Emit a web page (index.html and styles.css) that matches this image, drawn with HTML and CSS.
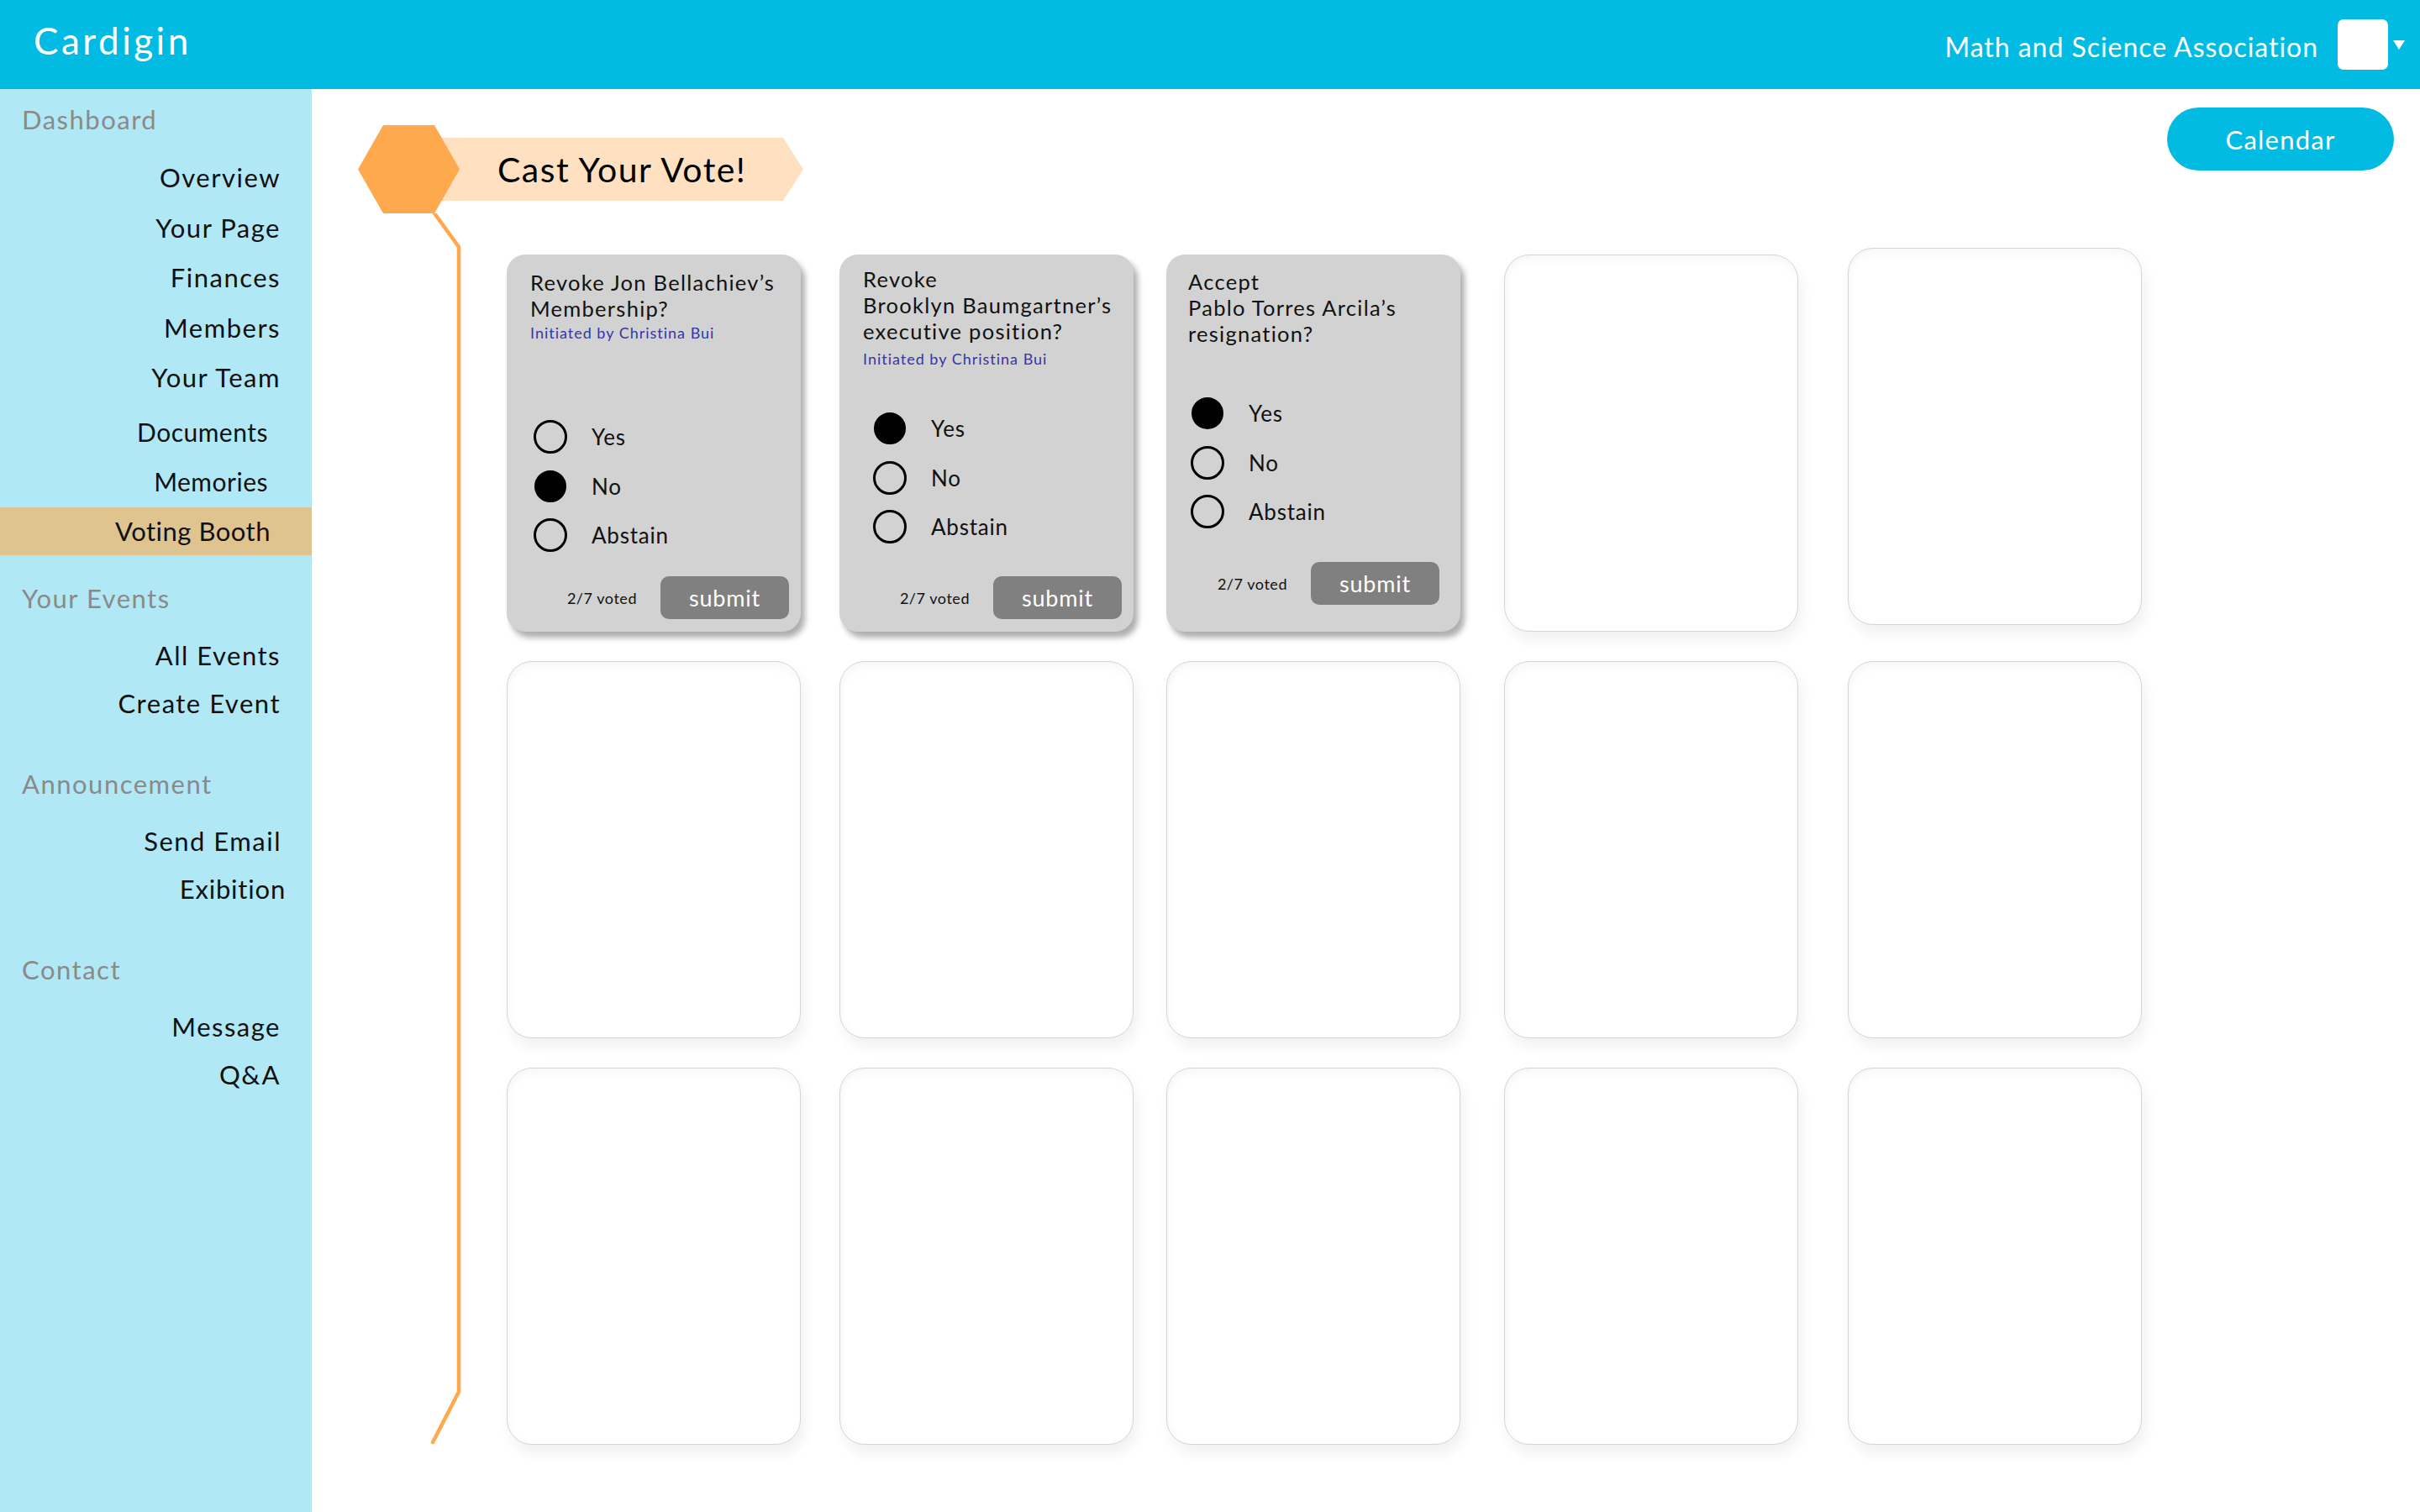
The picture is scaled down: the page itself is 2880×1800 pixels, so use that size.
FILE: index.html
```html
<!DOCTYPE html>
<html lang="en">
<head>
<meta charset="utf-8">
<title>Cardigin – Voting Booth</title>
<link rel="stylesheet" href="styles.css">
</head>
<body>
<div class="app">
  <header class="topbar">
    <div class="brand">Cardigin</div>
    <div class="org">
      <span class="org-name">Math and Science Association</span>
      <span class="org-avatar"></span>
      <span class="org-caret"></span>
    </div>
  </header>

  <nav class="sidebar">
    <section class="nav-section nav-section--main">
      <h2 class="nav-heading">Dashboard</h2>
      <ul class="nav-list">
        <li><a class="nav-link" href="#">Overview</a></li>
        <li><a class="nav-link" href="#">Your Page</a></li>
        <li><a class="nav-link" href="#">Finances</a></li>
        <li><a class="nav-link" href="#">Members</a></li>
        <li><a class="nav-link" href="#">Your Team</a></li>
        <li><a class="nav-link nav-link--indent nav-link--low" href="#">Documents</a></li>
        <li><a class="nav-link nav-link--indent" href="#">Memories</a></li>
        <li><a class="nav-link nav-link--active" href="#">Voting Booth</a></li>
      </ul>
    </section>
    <section class="nav-section nav-section--events">
      <h2 class="nav-heading">Your Events</h2>
      <ul class="nav-list">
        <li><a class="nav-link" href="#">All Events</a></li>
        <li><a class="nav-link" href="#">Create Event</a></li>
      </ul>
    </section>
    <section class="nav-section">
      <h2 class="nav-heading">Announcement</h2>
      <ul class="nav-list">
        <li><a class="nav-link nav-link--tight" href="#">Send Email</a></li>
        <li><a class="nav-link nav-link--outdent" href="#">Exibition</a></li>
      </ul>
    </section>
    <section class="nav-section">
      <h2 class="nav-heading">Contact</h2>
      <ul class="nav-list">
        <li><a class="nav-link" href="#">Message</a></li>
        <li><a class="nav-link" href="#">Q&amp;A</a></li>
      </ul>
    </section>
  </nav>

  <main class="main">
    <div class="main-head">
      <div class="page-title">
        <svg class="hex" viewBox="0 0 121 105" aria-hidden="true"><polygon points="30,0 91,0 121,52.5 91,105 30,105 0,52.5" fill="#ffa94f"/></svg>
        <h1 class="title-banner">Cast Your Vote!</h1>
      </div>
      <button class="calendar-btn" type="button">Calendar</button>
    </div>

    <div class="main-body">
      <svg class="rail" viewBox="0 0 177 1466" aria-hidden="true">
        <polyline points="91,0 120,40 120,1403 89,1463" fill="none" stroke="#ffa94f" stroke-width="4.5" stroke-linecap="round" stroke-linejoin="miter"/>
      </svg>

      <div class="board">
        <article class="vote-card vote-card--one">
          <h3 class="vote-title">Revoke Jon Bellachiev’s<br>Membership?</h3>
          <p class="vote-by">Initiated by Christina Bui</p>
          <ul class="vote-options">
            <li class="vote-option"><span class="radio"></span><span>Yes</span></li>
            <li class="vote-option"><span class="radio radio--on"></span><span>No</span></li>
            <li class="vote-option"><span class="radio"></span><span>Abstain</span></li>
          </ul>
          <div class="vote-footer"><span class="vote-count">2/7 voted</span><button class="submit-btn" type="button">submit</button></div>
        </article>

        <article class="vote-card vote-card--two">
          <h3 class="vote-title">Revoke<br>Brooklyn Baumgartner’s<br>executive position?</h3>
          <p class="vote-by">Initiated by Christina Bui</p>
          <ul class="vote-options">
            <li class="vote-option"><span class="radio radio--on"></span><span>Yes</span></li>
            <li class="vote-option"><span class="radio"></span><span>No</span></li>
            <li class="vote-option"><span class="radio"></span><span>Abstain</span></li>
          </ul>
          <div class="vote-footer"><span class="vote-count">2/7 voted</span><button class="submit-btn" type="button">submit</button></div>
        </article>

        <article class="vote-card vote-card--three">
          <h3 class="vote-title">Accept<br>Pablo Torres Arcila’s<br>resignation?</h3>
          <ul class="vote-options">
            <li class="vote-option"><span class="radio radio--on"></span><span>Yes</span></li>
            <li class="vote-option"><span class="radio"></span><span>No</span></li>
            <li class="vote-option"><span class="radio"></span><span>Abstain</span></li>
          </ul>
          <div class="vote-footer"><span class="vote-count">2/7 voted</span><button class="submit-btn" type="button">submit</button></div>
        </article>

        <div class="empty-card"></div>
        <div class="empty-card empty-card--raised"></div>

        <div class="empty-card"></div>
        <div class="empty-card"></div>
        <div class="empty-card"></div>
        <div class="empty-card"></div>
        <div class="empty-card"></div>

        <div class="empty-card"></div>
        <div class="empty-card"></div>
        <div class="empty-card"></div>
        <div class="empty-card"></div>
        <div class="empty-card"></div>
      </div>
    </div>
  </main>
</div>
</body>
</html>
```

FILE: styles.css
```css
* {
  box-sizing: border-box;
  margin: 0;
  padding: 0;
}

body {
  margin: 0;
  font-family: "Lato", "Noto Sans", sans-serif;
  color: #111;
  background: #fff;
}

.app {
  display: grid;
  grid-template-columns: 371px 1fr;
  grid-template-rows: 106px 1fr;
  height: 100vh;
  overflow: hidden;
}

/* ---------- top bar ---------- */
.topbar {
  grid-column: 1 / -1;
  background: #02bbe2;
  color: #fff;
  display: flex;
  align-items: center;
  justify-content: space-between;
  padding: 0 18px 0 40px;
}

.brand {
  font-size: 44px;
  letter-spacing: 0.08em;
  margin-bottom: 11px;
}

.org {
  display: flex;
  align-items: center;
}

.org-name {
  font-size: 32px;
  letter-spacing: 0.03em;
  margin-top: 4px;
}

.org-avatar {
  width: 60px;
  height: 60px;
  background: #fff;
  border-radius: 7px;
  margin-left: 23px;
}

.org-caret {
  width: 0;
  height: 0;
  border-left: 7px solid transparent;
  border-right: 7px solid transparent;
  border-top: 11px solid #fff;
  margin-left: 6px;
}

/* ---------- sidebar ---------- */
.sidebar {
  background: #b1e8f6;
  padding-top: 12px;
  font-size: 31px;
  letter-spacing: 1.5px;
}

.nav-section + .nav-section {
  margin-top: 43px;
}

.nav-section--events.nav-section {
  margin-top: 27px;
}

.nav-heading {
  font-size: 31px;
  font-weight: 400;
  line-height: 48px;
  padding-left: 26px;
  color: #8a8a8a;
  margin-bottom: 16px;
}

.nav-list {
  list-style: none;
}

.nav-link {
  display: block;
  text-align: right;
  padding-right: 37px;
  line-height: 57px;
  color: #111;
  text-decoration: none;
}

.nav-section--main .nav-link {
  line-height: 59.5px;
}

.nav-section--main .nav-link--indent {
  padding-right: 52px;
  font-size: 30px;
  letter-spacing: 0.5px;
}

.nav-section--main .nav-link--low {
  padding-top: 5px;
}

.nav-section--main .nav-link--active {
  background: #e0c48f;
  line-height: 57px;
  padding-right: 49px;
  letter-spacing: 0.5px;
}

.nav-link--tight {
  padding-right: 36px;
}

.nav-link--outdent {
  padding-right: 31px;
  letter-spacing: 0.8px;
}

/* ---------- main ---------- */
.main {
  padding: 22px 31px 0 55px;
  display: flex;
  flex-direction: column;
  min-width: 0;
}

.main-head {
  display: flex;
  justify-content: space-between;
  align-items: flex-start;
}

.page-title {
  display: flex;
  align-items: flex-start;
  margin-top: 21px;
}

.hex {
  width: 121px;
  height: 105px;
  flex: none;
  position: relative;
  z-index: 1;
}

.title-banner {
  margin-left: -60px;
  margin-top: 15px;
  width: 469px;
  height: 75px;
  background: #ffe0c0;
  clip-path: polygon(0 0, calc(100% - 24px) 0, 100% 50%, calc(100% - 24px) 100%, 0 100%);
  padding-left: 105px;
  font-size: 41px;
  font-weight: 400;
  letter-spacing: 0.036em;
  line-height: 75px;
  color: #000;
  white-space: nowrap;
}

.calendar-btn {
  width: 270px;
  height: 75px;
  border: 0;
  border-radius: 38px;
  background: #02bbe2;
  color: #fff;
  font-family: inherit;
  font-size: 31px;
  letter-spacing: 0.04em;
}

.main-body {
  display: flex;
}

.rail {
  width: 177px;
  height: 1466px;
  flex: none;
}

.board {
  padding-top: 49px;
  display: grid;
  grid-template-columns: 396px 389px 402px 409px 350px;
  grid-auto-rows: 449px;
  row-gap: 35px;
}

/* ---------- cards ---------- */
.empty-card {
  width: 350px;
  background: #fff;
  border: 1.5px solid #d5d5d5;
  border-radius: 30px;
  box-shadow: inset 0 10px 14px -6px rgba(0, 0, 0, 0.04), inset 8px 0 12px -8px rgba(0, 0, 0, 0.04), 4px 10px 16px rgba(0, 0, 0, 0.06);
}

.empty-card--raised {
  margin-top: -8px;
  margin-bottom: 8px;
}

.vote-card {
  width: 350px;
  background: #d2d2d2;
  border-radius: 22px;
  box-shadow: 5px 7px 7px rgba(0, 0, 0, 0.32);
  display: flex;
  flex-direction: column;
  padding: 18px 0 15px 28px;
}

.vote-title {
  font-size: 25.5px;
  font-weight: 400;
  line-height: 31px;
  letter-spacing: 0.05em;
  color: #111;
  white-space: nowrap;
}

.vote-by {
  font-size: 18px;
  line-height: 22px;
  letter-spacing: 0.055em;
  color: #3636a8;
  margin-top: 2px;
  white-space: nowrap;
}

.vote-options {
  list-style: none;
  margin-top: 84px;
  padding-left: 4px;
}

.vote-option {
  display: flex;
  align-items: center;
  gap: 29px;
  height: 58.5px;
  font-size: 26px;
  letter-spacing: 0.03em;
  color: #111;
}

.radio {
  width: 40px;
  height: 40px;
  border: 3px solid #000;
  border-radius: 50%;
  flex: none;
}

.radio--on {
  background: #000;
  transform: scale(0.95);
}

.vote-footer {
  margin-top: auto;
  display: flex;
  align-items: center;
  justify-content: flex-end;
  gap: 28px;
  padding-right: 14px;
}

.vote-count {
  font-size: 18px;
  letter-spacing: 0.03em;
  color: #111;
}

.submit-btn {
  width: 153px;
  height: 51px;
  border: 0;
  border-radius: 10px;
  background: #808080;
  color: #fff;
  font-family: inherit;
  font-size: 27px;
  letter-spacing: 0.03em;
  line-height: 51px;
}

.vote-card--two {
  padding-top: 14px;
}

.vote-card--two .vote-by {
  margin-top: 6px;
}

.vote-card--two .vote-options {
  margin-top: 43px;
  padding-left: 12px;
}

.vote-card--three {
  padding-top: 17px;
  padding-bottom: 32px;
  padding-left: 26px;
}

.vote-card--three .vote-options {
  margin-top: 50px;
  padding-left: 3px;
}

.vote-card--three .vote-footer {
  padding-right: 25px;
}
```
